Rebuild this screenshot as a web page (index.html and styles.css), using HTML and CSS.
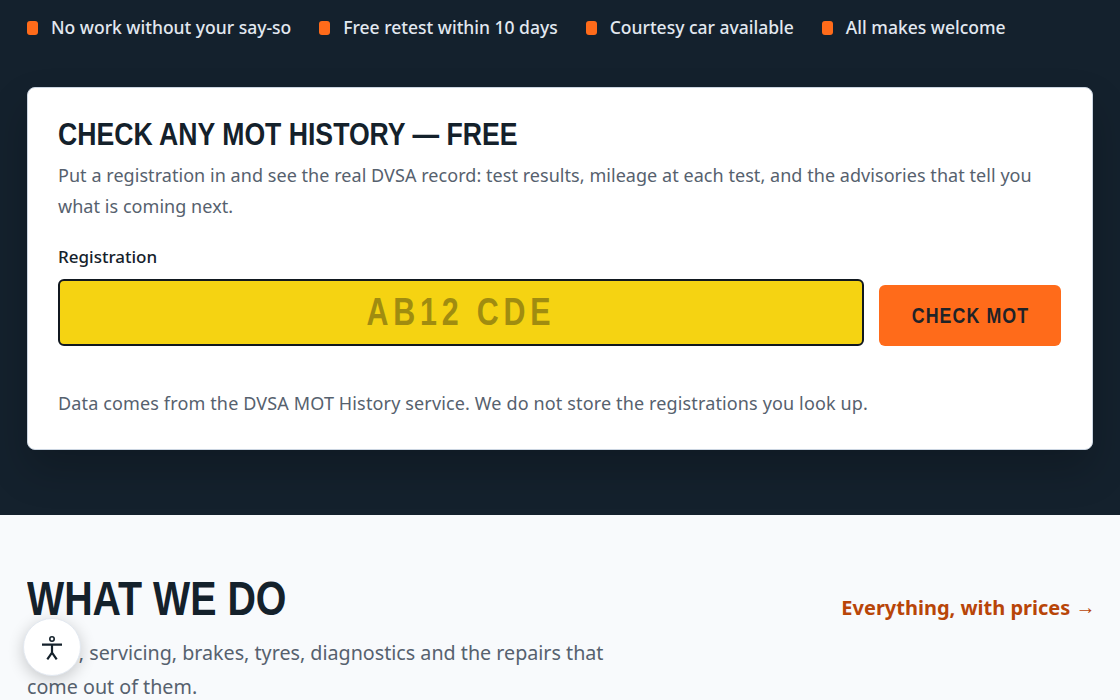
FILE: index.html
```html
<!DOCTYPE html>
<html lang="en">
<head>
<meta charset="utf-8">
<title>MOT check</title>
<link rel="stylesheet" href="styles.css">
</head>
<body>
<section class="hero">
  <ul class="promises">
    <li class="promise">No work without your say-so</li>
    <li class="promise">Free retest within 10 days</li>
    <li class="promise">Courtesy car available</li>
    <li class="promise">All makes welcome</li>
  </ul>
  <form class="card">
    <h2 class="card-title">CHECK ANY MOT HISTORY — FREE</h2>
    <p class="card-lead">Put a registration in and see the real DVSA record: test results, mileage at each test, and the advisories that tell you what is coming next.</p>
    <div class="reg-label">Registration</div>
    <div class="reg-row">
      <div class="reg-input"><span class="reg-placeholder">AB12 CDE</span></div>
      <button class="reg-button" type="button"><span class="reg-button-text">CHECK MOT</span></button>
    </div>
    <p class="card-note">Data comes from the DVSA MOT History service. We do not store the registrations you look up.</p>
  </form>
</section>
<section class="services">
  <div class="services-head">
    <div class="services-intro">
      <h2 class="services-title">WHAT WE DO</h2>
      <p class="services-lead">MOTs, servicing, brakes, tyres, diagnostics and the repairs that come out of them.</p>
    </div>
    <a class="services-link" href="#">Everything, with prices <span class="services-arrow">→</span></a>
  </div>
</section>
<button class="a11y" type="button" aria-label="Accessibility">
  <svg class="a11y-icon" viewBox="0 -1 24 26" fill="none" stroke="currentColor" stroke-width="2.2" stroke-linejoin="round">
    <circle cx="12" cy="4" r="2.2" stroke-width="1.6"/>
    <path d="M2 9.7h20M12 9.7v8M12 17.7 7.3 24.3M12 17.7l4.7 6.6"/>
  </svg>
</button>
</body>
</html>
```

FILE: styles.css
```css
* { box-sizing: border-box; }
html, body { margin: 0; padding: 0; }
body {
  height: 700px;
  overflow: hidden;
  font-family: "Noto Sans", sans-serif;
  font-size: 18px;
  line-height: 31px;
  color: #14212b;
  background: #f8fafc;
}
.hero {
  background: #14212d;
  padding: 12px 27.5px 65px 27px;
  height: 515px;
}
.promises {
  display: flex;
  gap: 28px;
  list-style: none;
  margin: 0 0 44px;
  padding: 0;
}
.promise {
  display: flex;
  align-items: center;
  gap: 13px;
  color: #e2e8f0;
  font-size: 17.5px;
  font-weight: 500;
}
.promise::before {
  content: "";
  width: 11px;
  height: 14px;
  border-radius: 3px;
  background: #ff6b1a;
}
.card {
  height: 363px;
  background: #fff;
  border: 1px solid #cbd5e1;
  border-radius: 8px;
  padding: 29px 30px 30px;
  box-shadow: 0 20px 40px rgba(0, 0, 0, .2);
}
.card-title {
  margin: 0;
  font-family: "Liberation Sans", sans-serif;
  font-size: 32px;
  line-height: 34px;
  font-weight: 700;
  color: #14212b;
  transform: scaleX(.832);
  transform-origin: left center;
  white-space: nowrap;
}
.card-lead {
  margin: 9px 0 19px;
  color: #56616e;
  font-size: 18px;
  letter-spacing: .05px;
}
.reg-label {
  font-size: 17px;
  font-weight: 500;
  color: #14212b;
  margin-bottom: 7px;
}
.reg-row {
  display: flex;
  gap: 15px;
  align-items: flex-end;
}
.reg-input {
  flex: 1;
  min-width: 0;
  height: 67px;
  display: flex;
  align-items: center;
  justify-content: center;
  border: 2px solid #111820;
  border-radius: 6px;
  background: #f5d312;
}
.reg-placeholder {
  display: inline-block;
  color: #a08c10;
  font-family: "Liberation Sans", sans-serif;
  font-size: 38px;
  font-weight: 700;
  letter-spacing: 6px;
  transform: scaleX(.8);
}
.reg-button {
  width: 182px;
  height: 61px;
  margin-right: .5px;
  border: 0;
  border-radius: 6px;
  background: #ff6b1a;
  color: #1f2328;
}
.reg-button-text {
  display: inline-block;
  font-family: "Liberation Sans", sans-serif;
  font-size: 22px;
  font-weight: 700;
  letter-spacing: 1.3px;
  transform: scaleX(.81);
}
.card-note {
  margin: 42px 0 0;
  color: #56616e;
  font-size: 18px;
  letter-spacing: .14px;
}
.services { padding: 57px 27.5px 0 27px; }
.services-head {
  display: flex;
  justify-content: space-between;
  align-items: flex-start;
}
.services-intro { width: 620px; }
.services-title {
  margin: 0 0 11px;
  font-family: "Liberation Sans", sans-serif;
  font-size: 48px;
  line-height: 53px;
  font-weight: 700;
  color: #14212b;
  transform: scaleX(.82);
  transform-origin: left center;
  white-space: nowrap;
}
.services-lead {
  margin: 0;
  font-size: 19.7px;
  line-height: 34px;
  color: #56616e;
}
.services-link {
  margin: 20px -3px 0 0;
  color: #b84508;
  font-weight: 700;
  font-size: 20px;
  text-decoration: none;
}
.services-arrow {
  font-family: "Liberation Sans", sans-serif;
  font-weight: 400;
  vertical-align: 1px;
}
.a11y {
  position: fixed;
  left: 23px;
  bottom: 24px;
  width: 58px;
  height: 58px;
  display: flex;
  align-items: center;
  justify-content: center;
  padding: 0;
  border: 1px solid #e2e8f0;
  border-radius: 50%;
  background: #fff;
  color: #14212b;
  box-shadow: 0 4px 16px rgba(0, 0, 0, .2);
}
.a11y-icon { width: 24px; height: 26px; }
```
